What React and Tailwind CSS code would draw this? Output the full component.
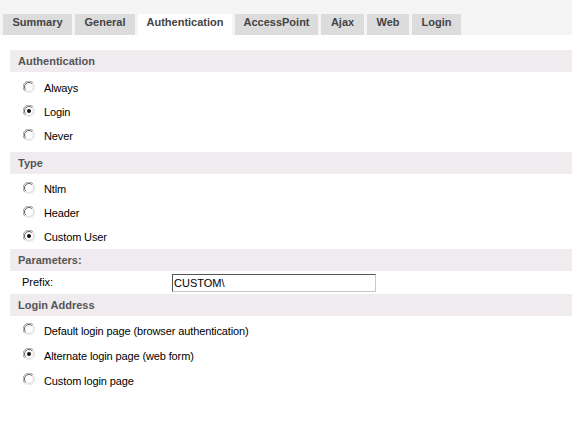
import React, { useState } from "react";

const tabs = [
  { label: "Summary", w: "w-[69px]" },
  { label: "General", w: "w-[60px]" },
  { label: "Authentication", w: "w-[94px]" },
  { label: "AccessPoint", w: "w-[83px]" },
  { label: "Ajax", w: "w-[43px]" },
  { label: "Web", w: "w-[42px]" },
  { label: "Login", w: "w-[49px]" },
];

const Radio = ({ checked }) => (
  <svg width="12" height="12" viewBox="0 0 12 12" className="shrink-0 -mt-[3px]">
    <circle cx="6" cy="6" r="5.5" fill="#ffffff" />
    {/* outer bevel */}
    <path d="M1.8 10.2 A5.5 5.5 0 0 1 10.2 1.8" fill="none" stroke="#9a9a9a" strokeWidth="1" />
    <path d="M10.2 1.8 A5.5 5.5 0 0 1 1.8 10.2" fill="none" stroke="#e8e8e8" strokeWidth="1" />
    {/* inner bevel */}
    <path d="M2.8 9.2 A4.5 4.5 0 0 1 9.2 2.8" fill="none" stroke="#606060" strokeWidth="1" />
    <path d="M9.2 2.8 A4.5 4.5 0 0 1 2.8 9.2" fill="none" stroke="#d8d8d8" strokeWidth="1" />
    {checked && <circle cx="6" cy="6" r="2" fill="#111111" />}
  </svg>
);

const SectionHeader = ({ children }) => (
  <div className="h-[22px] bg-[#efebef] pl-[8px] flex items-center text-[11px] font-bold text-[#555555]">
    {children}
  </div>
);

const RadioList = ({ options, value, onChange, rowH, className }) => (
  <div className={className}>
    {options.map((o) => (
      <label
        key={o}
        className={`${rowH} flex items-center gap-[9px] pl-[13px] cursor-default text-[11px] tracking-[-0.12px] text-black`}
        onClick={() => onChange(o)}
      >
        <Radio checked={value === o} />
        <span className="pt-[1px]">{o}</span>
      </label>
    ))}
  </div>
);

export default function App() {
  const [auth, setAuth] = useState("Login");
  const [type, setType] = useState("Custom User");
  const [loginPage, setLoginPage] = useState("Alternate login page (web form)");
  const [prefix, setPrefix] = useState("CUSTOM\\");

  return (
    <div
      className="w-[572px] h-[445px] bg-white overflow-hidden"
      style={{ fontFamily: '"Liberation Sans", Arial, sans-serif' }}
    >
      {/* Tab bar */}
      <div className="h-[35px] bg-[#f5f5f5] flex items-end gap-[3px] pl-[3px]">
        {tabs.map((t) => (
          <div
            key={t.label}
            className={`${t.w} h-[21px] flex justify-center pt-[1px] leading-[14px] text-[11px] font-bold text-[#444444] ${
              t.label === "Authentication" ? "bg-white" : "bg-[#dcdcdc]"
            }`}
          >
            {t.label}
          </div>
        ))}
      </div>

      <div className="pl-[10px] pt-[15px]">
        <SectionHeader>Authentication</SectionHeader>
        <RadioList
          options={["Always", "Login", "Never"]}
          value={auth}
          onChange={setAuth}
          rowH="h-[24px]"
          className="pt-[4px] pb-[4px]"
        />

        <SectionHeader>Type</SectionHeader>
        <RadioList
          options={["Ntlm", "Header", "Custom User"]}
          value={type}
          onChange={setType}
          rowH="h-[24px]"
          className="pt-[3px]"
        />

        <SectionHeader>Parameters:</SectionHeader>
        <div className="h-[23px] flex items-center text-[11px] text-black">
          <span className="pl-[12px] w-[162px]">Prefix:</span>
          <input
            value={prefix}
            onChange={(e) => setPrefix(e.target.value)}
            className="w-[204px] h-[18px] px-[1px] text-[11px] text-black bg-white outline-none border border-t-[#555555] border-l-[#555555] border-r-[#c8c8c8] border-b-[#c8c8c8]"
          />
        </div>

        <SectionHeader>Login Address</SectionHeader>
        <RadioList
          options={[
            "Default login page (browser authentication)",
            "Alternate login page (web form)",
            "Custom login page",
          ]}
          value={loginPage}
          onChange={setLoginPage}
          rowH="h-[25px]"
          className="pt-[2px]"
        />
      </div>
    </div>
  );
}
